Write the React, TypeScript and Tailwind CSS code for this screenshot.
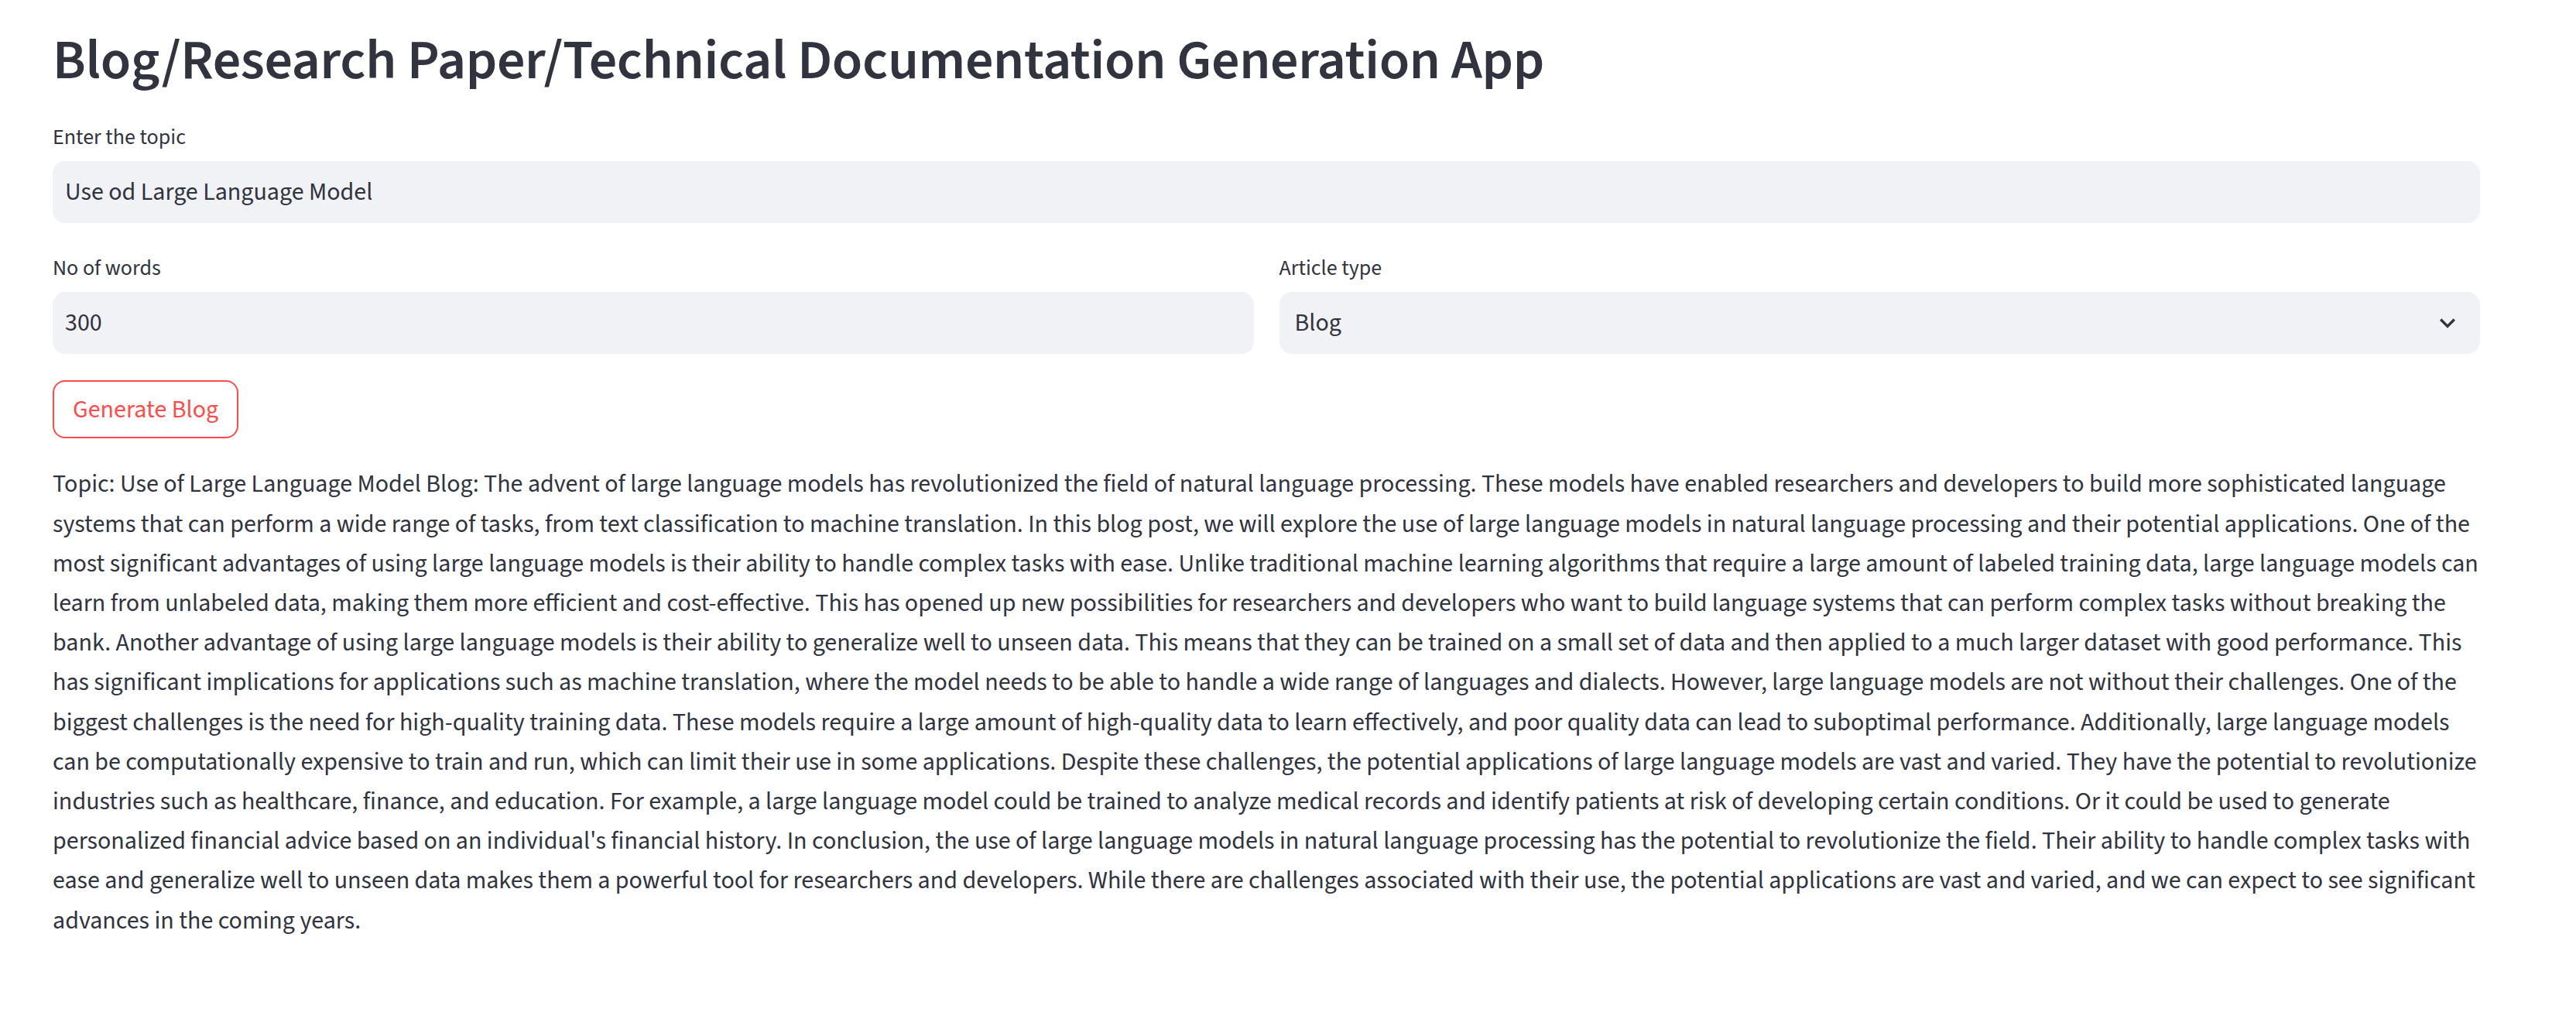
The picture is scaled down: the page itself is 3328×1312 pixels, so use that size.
import React from "react";

const lines = [
  "Topic: Use of Large Language Model Blog: The advent of large language models has revolutionized the field of natural language processing. These models have enabled researchers and developers to build more sophisticated language",
  "systems that can perform a wide range of tasks, from text classification to machine translation. In this blog post, we will explore the use of large language models in natural language processing and their potential applications. One of the",
  "most significant advantages of using large language models is their ability to handle complex tasks with ease. Unlike traditional machine learning algorithms that require a large amount of labeled training data, large language models can",
  "learn from unlabeled data, making them more efficient and cost-effective. This has opened up new possibilities for researchers and developers who want to build language systems that can perform complex tasks without breaking the",
  "bank. Another advantage of using large language models is their ability to generalize well to unseen data. This means that they can be trained on a small set of data and then applied to a much larger dataset with good performance. This",
  "has significant implications for applications such as machine translation, where the model needs to be able to handle a wide range of languages and dialects. However, large language models are not without their challenges. One of the",
  "biggest challenges is the need for high-quality training data. These models require a large amount of high-quality data to learn effectively, and poor quality data can lead to suboptimal performance. Additionally, large language models",
  "can be computationally expensive to train and run, which can limit their use in some applications. Despite these challenges, the potential applications of large language models are vast and varied. They have the potential to revolutionize",
  "industries such as healthcare, finance, and education. For example, a large language model could be trained to analyze medical records and identify patients at risk of developing certain conditions. Or it could be used to generate",
  "personalized financial advice based on an individual's financial history. In conclusion, the use of large language models in natural language processing has the potential to revolutionize the field. Their ability to handle complex tasks with",
  "ease and generalize well to unseen data makes them a powerful tool for researchers and developers. While there are challenges associated with their use, the potential applications are vast and varied, and we can expect to see significant",
  "advances in the coming years.",
];

function Label({ children }: { children: React.ReactNode }) {
  return <div className="text-[28px] leading-[44px] mb-[9px] text-[#31333f]">{children}</div>;
}

export default function App() {
  return (
    <div className="min-h-screen w-full bg-white text-[#31333f] font-['Source_Sans_3','Source_Sans_Pro','Noto_Sans',sans-serif]">
      <div className="pl-[68px] pr-[124px] pt-[36px] flex flex-col">
        <h1 className="text-[72px] font-semibold leading-[1.2] tracking-[-0.005em] m-0">
          Blog/Research Paper/Technical Documentation Generation App
        </h1>

        <div className="mt-[33px]">
          <Label>Enter the topic</Label>
          <div className="h-[80px] rounded-[16px] bg-[#f0f2f6] flex items-center pl-[16px] text-[32px]">
            Use od Large Language Model
          </div>
        </div>

        <div className="mt-[36px] flex gap-[33px]">
          <div className="flex-1">
            <Label>No of words</Label>
            <div className="h-[80px] rounded-[16px] bg-[#f0f2f6] flex items-center pl-[16px] text-[32px]">
              300
            </div>
          </div>
          <div className="flex-1">
            <Label>Article type</Label>
            <div className="h-[80px] rounded-[16px] bg-[#f0f2f6] flex items-center justify-between pl-[20px] pr-[22px] text-[32px]">
              <span>Blog</span>
              <svg width="40" height="40" viewBox="0 0 24 24" fill="#31333f" aria-hidden="true">
                <path d="M16.59 8.59 12 13.17 7.41 8.59 6 10l6 6 6-6z" />
              </svg>
            </div>
          </div>
        </div>

        <div className="mt-[34px]">
          <button className="h-[75px] px-[24px] rounded-[16px] border-2 border-[#ff4b4b] text-[#ff4b4b] text-[32px] bg-white flex items-center">
            Generate Blog
          </button>
        </div>

        <p className="mt-[34px] text-[32px] leading-[51.2px] whitespace-nowrap">
          {lines.map((l, i) => (
            <React.Fragment key={i}>
              {l}
              {i < lines.length - 1 && <br />}
            </React.Fragment>
          ))}
        </p>
      </div>
    </div>
  );
}
